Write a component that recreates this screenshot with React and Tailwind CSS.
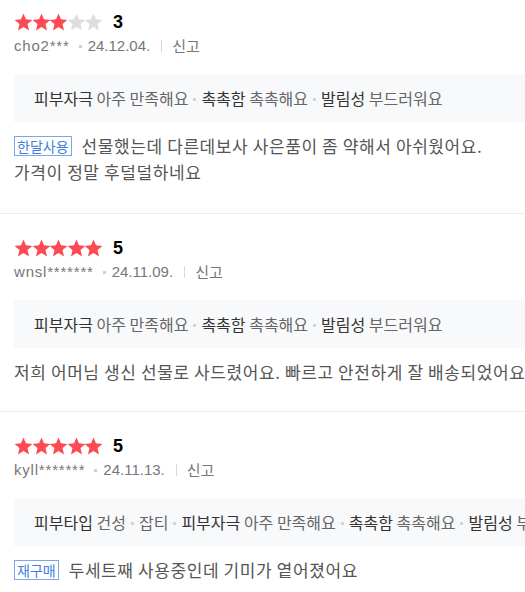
import React from "react";

const Star = ({ on }) => (
  <svg width="19" height="18" viewBox="0 0 24 23" className="block shrink-0">
    <path
      d="M12 0.5L15.17 8.13L23.41 8.79L17.14 14.17L19.05 22.21L12 17.9L4.95 22.21L6.86 14.17L0.59 8.79L8.83 8.13Z"
      fill={on ? "#fc4a55" : "#dedede"}
    />
  </svg>
);

const Dot = () => (
  <span className="inline-block w-[3px] h-[3px] bg-[#d4d4d4] mx-[5px] align-middle relative top-[-1px]" />
);

function Review({ rating, user, date, attrs, tag, lines, first }) {
  return (
    <div
      className={
        "px-[14px] border-b border-[#ececec] " +
        (first ? "pt-[13px] pb-[28px]" : "pt-[25px] pb-[26px]")
      }
    >
      <div className="flex items-center h-[18px]">
        <div className="flex">
          {[1, 2, 3, 4, 5].map((i) => (
            <span key={i} className="w-[17.6px] flex justify-start">
              <Star on={i <= rating} />
            </span>
          ))}
        </div>
        <span className="ml-[11px] text-[18px] font-bold text-black leading-[18px] font-['Liberation_Sans',sans-serif]">
          {rating}
        </span>
      </div>
      <div className="mt-[5px] flex items-center h-[20px] text-[15px] text-[#777] leading-[20px]">
        <span className="font-['Liberation_Sans',sans-serif] tracking-[0.8px]">{user}</span>
        <span className="inline-block w-[3px] h-[3px] bg-[#d0d0d0] ml-[9px] mr-[6px]" />
        <span className="font-['Liberation_Sans',sans-serif]">{date}</span>
        <span className="inline-block w-px h-[12px] bg-[#d8d8d8] ml-[11px] mr-[10px]" />
        <span>신고</span>
      </div>
      <div className="mt-[18px] h-[48px] bg-[#f8f9fb] pl-[20px] flex items-center whitespace-nowrap text-[16px] leading-[20px]">
        <span>
          {attrs.map((a, i) => (
            <React.Fragment key={i}>
              {i > 0 && <Dot />}
              {a[0] && <span className="text-[#333]">{a[0]}</span>}
              {a[0] && a[1] ? " " : null}
              {a[1] && <span className="text-[#666]">{a[1]}</span>}
            </React.Fragment>
          ))}
        </span>
      </div>
      <div className="mt-[11px] text-[17px] tracking-[0.6px] leading-[26px] text-[#555] whitespace-nowrap">
        {lines.map((l, i) => (
          <div key={i} className="flex items-center">
            {i === 0 && tag && (
              <span className="mr-[10px] border border-[#7aa6ee] text-[#3f7fe0] text-[14px] tracking-normal leading-[18px] px-[2px] h-[20px] flex items-center">
                {tag}
              </span>
            )}
            <span>{l}</span>
          </div>
        ))}
      </div>
    </div>
  );
}

export default function App() {
  return (
    <div className="w-[525px] h-[592px] overflow-hidden bg-white font-['Noto_Sans_CJK_KR','Noto_Sans',sans-serif]">
      <div className="w-[580px]">
        <Review
          first
          rating={3}
          user="cho2***"
          date="24.12.04."
          attrs={[
            ["피부자극", "아주 만족해요"],
            ["촉촉함", "촉촉해요"],
            ["발림성", "부드러워요"],
          ]}
          tag="한달사용"
          lines={[
            "선물했는데 다른데보사 사은품이 좀 약해서 아쉬웠어요.",
            "가격이 정말 후덜덜하네요",
          ]}
        />
        <Review
          rating={5}
          user="wnsl*******"
          date="24.11.09."
          attrs={[
            ["피부자극", "아주 만족해요"],
            ["촉촉함", "촉촉해요"],
            ["발림성", "부드러워요"],
          ]}
          lines={["저희 어머님 생신 선물로 사드렸어요. 빠르고 안전하게 잘 배송되었어요"]}
        />
        <Review
          rating={5}
          user="kyll*******"
          date="24.11.13."
          attrs={[
            ["피부타입", "건성"],
            ["", "잡티"],
            ["피부자극", "아주 만족해요"],
            ["촉촉함", "촉촉해요"],
            ["발림성", "부드러워요"],
          ]}
          tag="재구매"
          lines={["두세트째 사용중인데 기미가 옅어졌어요"]}
        />
      </div>
    </div>
  );
}
